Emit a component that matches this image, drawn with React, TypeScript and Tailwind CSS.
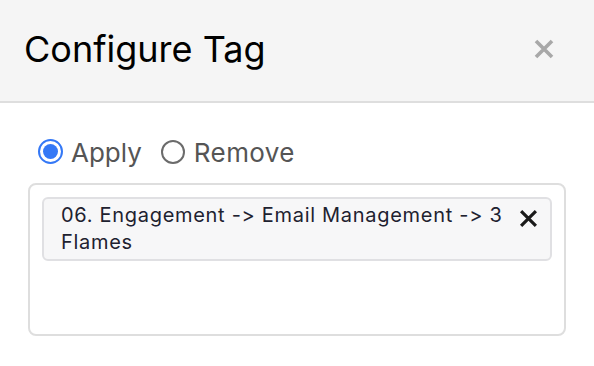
export default function App() {
  return (
    <div className="h-[366px] w-[594px] bg-white font-['Inter',sans-serif] [font-feature-settings:'calt'_0,'liga'_0]">
      <div className="flex h-[103px] items-center justify-between border-b-2 border-[#dedede] bg-[#f5f5f5] pl-[24px] pr-[39px]">
        <h1 className="mt-[-3px] text-[36px] leading-none text-black">Configure Tag</h1>
        <svg width="22" height="22" viewBox="0 0 22 22" className="mt-[-4px]">
          <path d="M3 3 L19 19 M19 3 L3 19" stroke="#a8a8a8" strokeWidth="3.6" />
        </svg>
      </div>
      <div className="px-[28px] pt-[32px]">
        <div className="flex items-center gap-[19px] pl-[10px] text-[26px] leading-[36px] text-[#555]">
          <label className="flex items-center gap-[8px]">
            <span className="mt-[-3px] flex h-[25px] w-[25px] items-center justify-center rounded-full border-2 border-[#3478f6]">
              <span className="h-[15px] w-[15px] rounded-full bg-[#3478f6]" />
            </span>
            Apply
          </label>
          <label className="flex items-center gap-[9px]">
            <span className="mt-[-3px] h-[24px] w-[24px] rounded-full border-2 border-[#6b6b6b]" />
            <span className="tracking-[0.4px]">Remove</span>
          </label>
        </div>
        <div className="mt-[12px] h-[153px] rounded-lg border-2 border-[#dedede] px-[12px] pt-[12px]">
          <div className="flex items-start rounded-md border-2 border-[#e0e0e3] bg-[#f7f7f8] py-[3px] pl-[17px] pr-[12px]">
            <span className="flex-1 text-[20px] leading-[27px] tracking-[0.7px] text-[#1e2230]">
              06. Engagement -&gt; Email Management -&gt; 3 Flames
            </span>
            <svg width="19" height="19" viewBox="0 0 18 18" className="mt-[7px] ml-[4px]">
              <path d="M2 2 L16 16 M16 2 L2 16" stroke="#1a1a1a" strokeWidth="3" />
            </svg>
          </div>
        </div>
      </div>
    </div>
  );
}
